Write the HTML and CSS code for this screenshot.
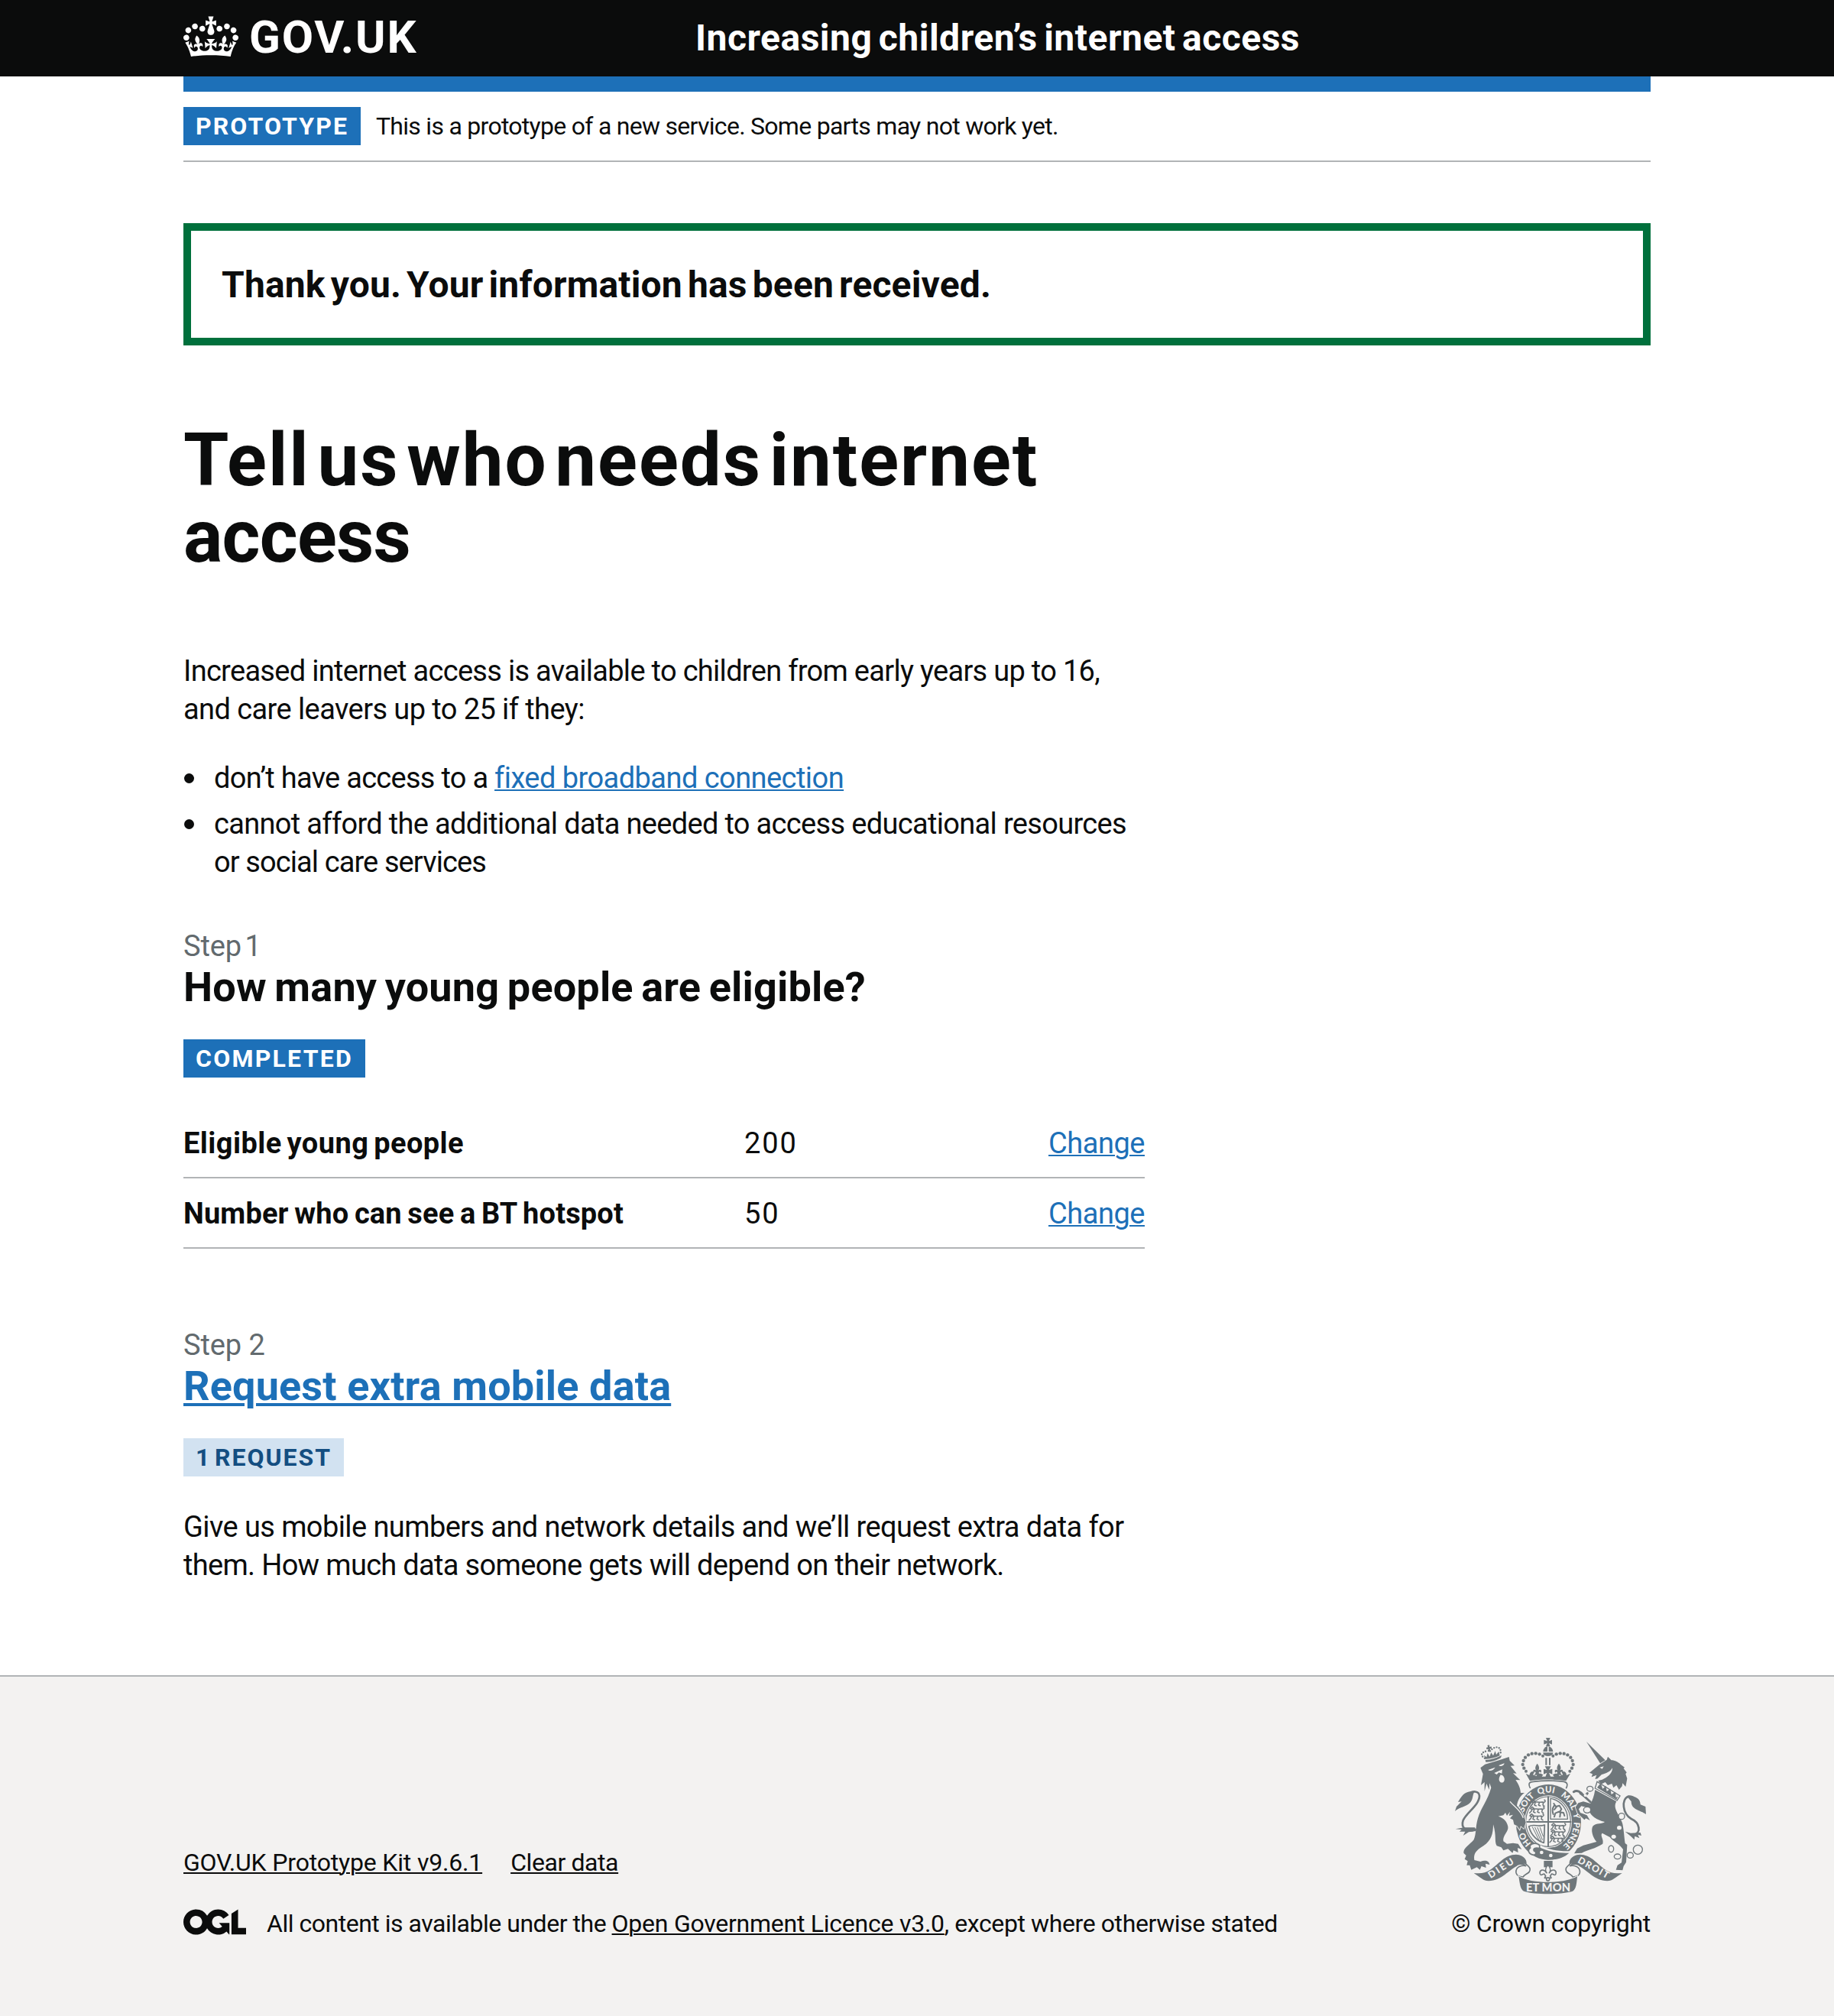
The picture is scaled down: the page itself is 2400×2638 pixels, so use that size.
FILE: index.html
```html
<!DOCTYPE html>
<html lang="en">
<head>
<meta charset="utf-8">
<title>Tell us who needs internet access</title>
<link rel="stylesheet" href="styles.css">
</head>
<body>
<header class="header">
  <div class="container header-row">
    <a class="logo" href="#">
      <svg class="logo-crown" viewBox="0 0 132 97" width="72" height="60" preserveAspectRatio="xMidYMid meet" aria-hidden="true"><path fill="currentColor" fill-rule="evenodd" d="M25 30.2c3.5 1.5 7.7-.2 9.1-3.7 1.5-3.6-.2-7.8-3.9-9.2-3.6-1.4-7.6.3-9.1 3.9-1.4 3.5.3 7.5 3.9 9zM9 39.5c3.6 1.5 7.8-.2 9.2-3.7 1.5-3.6-.2-7.8-3.9-9.1-3.6-1.5-7.6.2-9.1 3.8-1.4 3.5.3 7.5 3.8 9zM4.4 57.2c3.5 1.5 7.7-.2 9.1-3.8 1.5-3.6-.2-7.7-3.9-9.1-3.5-1.5-7.6.3-9.1 3.8-1.4 3.5.3 7.6 3.9 9.1zm38.3-21.4c3.5 1.5 7.7-.2 9.1-3.8 1.5-3.6-.2-7.7-3.9-9.1-3.6-1.5-7.6.3-9.1 3.8-1.3 3.6.4 7.7 3.9 9.1zm64.4-5.6c-3.6 1.5-7.8-.2-9.1-3.7-1.5-3.6.2-7.8 3.8-9.2 3.6-1.4 7.7.3 9.2 3.9 1.3 3.5-.4 7.5-3.9 9zm15.9 9.3c-3.6 1.5-7.7-.2-9.1-3.7-1.5-3.6.2-7.8 3.7-9.1 3.6-1.5 7.7.2 9.2 3.8 1.5 3.5-.3 7.5-3.8 9zm4.7 17.7c-3.6 1.5-7.8-.2-9.2-3.8-1.5-3.6.2-7.7 3.9-9.1 3.6-1.5 7.7.3 9.2 3.8 1.3 3.5-.4 7.6-3.9 9.1zM89.3 35.8c-3.6 1.5-7.8-.2-9.2-3.8-1.4-3.6.2-7.7 3.9-9.1 3.6-1.5 7.7.3 9.2 3.8 1.4 3.6-.3 7.7-3.9 9.1zM69.7 17.7l8.9 4.7V9.3l-8.9 2.8c-.2-.3-.5-.6-.9-.9L72.4 0H59.6l3.5 11.2c-.3.3-.6.5-.9.9l-8.8-2.8v13.1l8.8-4.7c.3.3.6.7.9.9l-5 15.4v.1c-.2.8-.4 1.6-.4 2.4 0 4.1 3.1 7.5 7 8.1h.2c.3 0 .7.1 1 .1.4 0 .7 0 1-.1h.2c4-.6 7.1-4.1 7.1-8.1 0-.8-.1-1.7-.4-2.4V34l-5.1-15.4c.4-.2.7-.6 1-.9zM66 92.8c16.9 0 32.8 1.1 47.1 3.2 4-16.9 8.9-26.7 14-33.5l-9.6-3.4c1 4.9 1.1 7.2 0 10.2-1.5-1.4-3-4.3-4.2-8.7L108.6 76c2.8-2 5-3.2 7.5-3.3-4.4 9.4-10 11.9-13.6 11.2-4.3-.8-6.3-4.6-5.6-7.9 1-4.7 5.7-5.9 8-.5 4.3-8.7-3-11.4-7.6-8.8 7.1-7.2 7.9-13.5 2.1-21.1-8 6.1-8.1 12.3-4.5 20.8-4.7-5.4-12.1-2.5-9.5 6.2 3.4-5.2 7.9-2 7.2 3.1-.6 4.3-6.4 7.8-13.5 7.2-10.3-.9-10.9-8-11.2-13.8 2.5-.5 7.1 1.8 11 7.3L80.2 60c-4.1 4.4-8 5.3-12.3 5.4 1.4-4.4 8-11.6 8-11.6H55.5s6.4 7.2 7.9 11.6c-4.2-.1-8-1-12.3-5.4l1.4 16.4c3.9-5.5 8.5-7.7 10.9-7.3-.3 5.8-.9 12.8-11.1 13.8-7.2.6-12.9-2.9-13.5-7.2-.7-5 3.8-8.3 7.1-3.1 2.7-8.7-4.6-11.6-9.4-6.2 3.7-8.5 3.6-14.7-4.6-20.8-5.8 7.6-5 13.9 2.2 21.1-4.7-2.6-11.9.1-7.7 8.8 2.3-5.5 7.1-4.2 8.1.5.7 3.3-1.3 7.1-5.7 7.9-3.5.7-9-1.8-13.5-11.2 2.5.1 4.7 1.3 7.5 3.3l-4.7-15.4c-1.2 4.4-2.7 7.2-4.3 8.7-1.1-3-.9-5.3 0-10.2l-9.5 3.4c5 6.9 9.9 16.7 14 33.5 14.8-2.1 30.8-3.2 47.7-3.2z"/></svg>
      <span class="logo-text">GOV.UK</span>
    </a>
    <a class="service-name" href="#">Increasing children’s internet access</a>
  </div>
</header>

<div class="container">
  <div class="blue-bar"></div>
  <div class="phase-banner">
    <strong class="tag tag-phase">prototype</strong>
    <span class="phase-text">This is a prototype of a new service. Some parts may not work yet.</span>
  </div>

  <main class="main">
    <div class="notice"><h2 class="notice-title">Thank you. Your information has been received.</h2></div>

    <div class="column">
      <h1 class="title">Tell us who needs internet <span class="title-end">access</span></h1>

      <p class="body intro">Increased internet access is available to children from early years up to 16, <span class="intro-end">and care leavers up to 25 if they:</span></p>
      <ul class="list">
        <li class="item-broadband">don’t have access to a <a class="link link-broadband" href="#">fixed broadband connection</a></li>
        <li>cannot afford the additional data needed to access educational resources <span class="item-end">or social care services</span></li>
      </ul>

      <section class="step">
        <span class="caption caption-one">Step 1</span>
        <h2 class="heading heading-plain">How many young people are eligible?</h2>
        <strong class="tag tag-completed">Completed</strong>
        <dl class="summary">
          <div class="summary-row">
            <dt class="key-eligible">Eligible young people</dt><dd class="value">200</dd><dd class="action"><a class="link" href="#">Change</a></dd>
          </div>
          <div class="summary-row">
            <dt class="key-hotspot">Number who can see a BT hotspot</dt><dd class="value">50</dd><dd class="action"><a class="link" href="#">Change</a></dd>
          </div>
        </dl>
      </section>

      <section class="step step-two">
        <span class="caption">Step 2</span>
        <h2 class="heading"><a class="link link-heading" href="#">Request extra mobile data</a></h2>
        <strong class="tag tag-light">1 request</strong>
        <p class="body give">Give us mobile numbers and network details and we’ll request extra data for <span class="give-end">them. How much data someone gets will depend on their network.</span></p>
      </section>
    </div>
  </main>
</div>

<footer class="footer">
  <div class="container footer-row">
    <div>
      <div class="footer-links"><a class="kit" href="#">GOV.UK Prototype Kit v9.6.1</a><a class="clear" href="#">Clear data</a></div>
      <div class="licence">
        <svg class="ogl" viewBox="0 0 483.2 195.7" width="82" height="34" aria-hidden="true"><path fill="currentColor" d="M421.5 142.8V.1l-50.7 32.3v161.1h112.4v-50.7zm-122.3-9.6A47.12 47.12 0 0 1 221 97.8c0-26 21.1-47.1 47.1-47.1 16.7 0 31.4 8.7 39.7 21.8l42.7-27.2A97.63 97.63 0 0 0 268.1 0c-36.5 0-68.3 20.1-85.1 49.7A98 98 0 0 0 97.8 0C43.9 0 0 43.9 0 97.8s43.9 97.8 97.8 97.8c36.5 0 68.3-20.1 85.1-49.7a97.76 97.76 0 0 0 149.6 25.4l19.4 22.2h3v-87.8h-80l24.3 27.5zM97.8 145c-26 0-47.1-21.1-47.1-47.1s21.1-47.1 47.1-47.1 47.1 21.1 47.1 47.1S123.8 145 97.8 145"/></svg>
        <span class="licence-text">All content is available under the <a href="#">Open Government Licence v3.0</a><span class="licence-end">, except where otherwise stated</span></span>
      </div>
    </div>
    <div class="copyright">
      <svg class="crest" viewBox="60 60 780 642" width="260" height="214" aria-hidden="true">
        <defs>
          <path id="motto" d="M438 515A101 114 0 0 1 438 287A101 114 0 0 1 438 515"/>
          <g id="fleur"><path d="M0-27C-8-16-10-8-4 0C-12-6-20 0-14 9C-11 4-7 5-6 10L-12 18H12L6 10C7 5 11 4 14 9C20 0 12-6 4 0C10-8 8-16 0-27Z"/></g>
          <g id="passant" fill="none" stroke-width="4.5" stroke-linecap="round" stroke-linejoin="round"><path d="M-30 10L-24 4L-20-4L-27-7M-22-5C-10-9 2-3 14-6L20-2L18 6L24 10M-12-3L-15 6L-8 9M4-3L1 6L8 9M16-6C28-2 30-12 24-14M-26-9L-20-14L-14-9"/></g>
        </defs>
        <g class="ink">
          <!-- royal crown -->
          <path d="M429 72H446L441 85L453 80V98L441 93L446 106H429L434 93L421 98V80L434 85Z"/>
          <path d="M418 126C419 113 427 107 435 106V126ZM440 106C449 108 456 114 457 126H440Z"/>
          <path d="M418 130H457C456 140 448 144 437 144C427 144 419 140 418 130Z"/>
          <g id="beads">
            <circle cx="417" cy="143" r="6"/><circle cx="404" cy="136" r="6.5"/><circle cx="389" cy="133" r="6.5"/><circle cx="374" cy="134" r="6.5"/><circle cx="360" cy="139" r="6.5"/><circle cx="348" cy="149" r="6.5"/><circle cx="341" cy="162" r="6.5"/><circle cx="338" cy="177" r="6.5"/><circle cx="343" cy="191" r="6.5"/><circle cx="351" cy="203" r="6"/>
          </g>
          <use href="#beads" transform="translate(874 0) scale(-1 1)"/>
          <path d="M427 151H433V179H427ZM441 151H447V179H441Z"/>
          <path d="M350 212L366 241C410 234 464 234 508 241L525 212L510 219C510 207 500 199 491 208L496 217L482 222C480 212 466 208 456 217L461 224H413L418 217C408 208 394 212 392 222L378 217L383 208C375 199 366 207 364 219Z"/>
          <use href="#fleur" x="395" y="200"/><use href="#fleur" x="480" y="200"/>
          <path d="M425 184H449L441 198L454 194V215L441 209L448 226H427L433 209L420 215V194L433 198Z"/>
          <path class="line" d="M367 268C358 250 365 245 380 244C420 239 460 239 500 244C514 247 515 256 509 269" stroke-width="5"/>
          <!-- garter -->
          <ellipse cx="439" cy="403" rx="128" ry="148"/>
        </g>
        <path class="paper" d="M369 266C400 249 476 249 506 267L509 257C480 245 400 245 366 257Z"/>
        <ellipse class="paper" cx="438" cy="401" rx="93" ry="103"/>
        <ellipse class="line" cx="438" cy="401" rx="88" ry="98" stroke-width="3.5"/>
        <g class="motto">
          <text><textPath href="#motto" startOffset="74">HO</textPath></text>
          <text><textPath href="#motto" startOffset="205">SOIT</textPath></text>
          <text><textPath href="#motto" startOffset="298">QUI</textPath></text>
          <text><textPath href="#motto" startOffset="388">MAL</textPath></text>
          <text><textPath href="#motto" startOffset="474">Y</textPath></text>
          <text><textPath href="#motto" startOffset="508">PENSE</textPath></text>
        </g>
        <!-- quartered arms -->
        <g class="line">
          <path d="M438 304V498M350 402H527" stroke-width="6"/>
          <g><use href="#passant" x="399" y="330"/><use href="#passant" x="395" y="357"/><use href="#passant" x="393" y="385"/></g>
          <g><use href="#passant" x="479" y="422"/><use href="#passant" x="477" y="447"/><use href="#passant" x="474" y="472"/></g>
          <path d="M447 310V391H514C515 355 490 318 447 310Z" stroke-width="4"/>
          <path d="M460 330L468 342L482 338L490 352L482 364L498 366L502 378M470 344L462 354M480 362L466 368L462 382M486 366L484 382M458 372C450 350 458 344 462 338" stroke-width="6"/>
          <path d="M362 420C380 408 400 424 424 414L421 484C398 478 372 458 362 420Z" stroke-width="5"/>
          <path d="M376 422L404 478M386 424L410 476M396 424L415 472M406 424L418 458" stroke-width="3"/>
        </g>
        <!-- buckle and strap -->
        <path class="paper" d="M392 484C430 512 480 520 540 516L530 528C475 530 425 522 388 500Z"/>
        <path class="ink" d="M398 498C430 518 480 526 520 524C490 552 440 560 388 536Z"/>
        <circle class="paper" cx="412" cy="522" r="7"/><circle class="paper" cx="448" cy="534" r="7"/>
        <path class="halo" d="M404 494C388 480 360 488 368 504C356 512 360 530 382 532C394 528 390 518 382 516C378 506 388 502 404 506Z"/>

        <!-- lion -->
        <path class="ink halo-thin" d="M172 190L190 176C220 168 250 158 284 147L287 162L306 181L290 182L314 212L300 211L328 238L310 237C322 255 328 268 330 288H345C328 300 318 318 315 338C330 352 348 382 350 404L342 428L330 418L326 432L316 418L304 412L300 394L288 388L300 374L284 378L288 362L276 378L270 366L262 376L242 380C262 386 276 398 280 420C284 440 258 455 262 478L276 488L300 485L320 488L334 510L318 504L320 522L302 514L298 524L280 508L262 514L254 502L236 496C226 478 236 458 222 412C222 450 214 476 184 496C154 514 144 528 148 552L172 558C190 550 206 554 208 570L192 566L194 582L176 576L170 590L158 580L136 590L130 572L118 572L122 556L110 548L116 534L106 524C104 504 130 492 146 472C156 452 152 420 162 388C174 346 200 320 214 268L208 250L206 276L196 252L188 282L188 246L174 258L182 214Z"/>
        <path class="paper" d="M202 198L230 188C224 200 208 204 202 198ZM244 180L266 172C264 184 248 186 244 180ZM226 210L258 196L256 212L244 208L236 216ZM250 218C264 216 272 238 262 246C250 252 242 240 246 228Z"/>
        <path class="cut" d="M288 322C304 342 330 356 340 386"/>
        <path class="ink" d="M191 159C214 158 232 152 255 141L252 150C236 160 214 168 193 167Z"/>
        <path class="ink" d="M190 155L186 140L196 148L200 132L208 146L214 130L222 142L230 124L234 138L244 126L248 142C230 150 210 156 190 155Z"/>
        <path class="dots" d="M189 152C170 142 174 126 200 124M204 123L202 110M210 124C232 98 258 108 250 136"/>
        <path class="ink" d="M199 102L207 100L208 108L215 106L216 114L209 115L211 122L203 123L203 116L196 117L195 110L202 109Z"/>
        <path class="line" d="M152 432C116 446 94 424 104 396C116 366 168 336 168 300C166 280 142 278 122 294" stroke-width="8"/>
        <path class="ink" d="M148 284C110 278 98 302 84 324L98 322L78 342L72 360C88 344 118 342 132 326C144 312 140 298 148 284ZM74 430L98 432L90 440L112 440L104 456L126 442L154 438L150 424L108 424Z"/>

        <!-- unicorn -->
        <path class="ink" d="M588 87L662 160L642 172Z"/>
        <path class="ink" d="M600 209L640 176L668 158L672 146L686 160C700 160 714 168 722 176L738 188L734 192L746 208L742 214L748 232L742 264L730 250L728 262L716 276L706 258L694 268L688 252L672 258L662 246L646 254L634 240L650 236C668 230 692 210 690 190C682 206 664 212 648 216L632 232L622 234L628 218L608 226L612 214Z"/>
        <path class="paper" d="M640 188L656 184L650 194Z"/>
        <path class="paper line-edge" d="M630 244L720 300L708 318L622 270Z"/>
        <path class="ink" d="M634 262L644 250L652 272L664 260L668 282L682 272L686 294L702 284L704 306L712 302L706 314L630 268Z"/>
        <path class="ink halo-thin" d="M622 276L706 322C688 350 722 378 730 410C736 440 736 460 740 486L748 492L744 560L734 576L730 592L704 590L710 572L726 562L732 510C720 490 694 480 680 462L650 446C640 456 658 470 652 488C626 506 590 512 570 524L540 526L552 506L576 494L628 480C612 464 604 432 614 418C628 404 650 412 660 402C628 394 604 378 600 360L586 344L568 340L558 352L564 366L590 376L602 396L586 388L580 394L554 368L545 344L556 328L576 322L604 330C612 318 618 300 622 276Z"/>
        <path class="line" d="M604 324L578 300C566 282 550 276 538 284M564 290L580 302L592 290" stroke-width="9"/>
        <g class="line" stroke-width="4">
          <ellipse cx="602" cy="272" rx="12" ry="10"/><ellipse class="paper" cx="591" cy="355" rx="14" ry="12"/><ellipse class="paper" cx="726" cy="380" rx="12" ry="12"/><ellipse cx="685" cy="508" rx="10" ry="13"/><ellipse cx="710" cy="538" rx="13" ry="10"/><ellipse cx="760" cy="533" rx="12" ry="11"/><circle cx="790" cy="511" r="18"/>
        </g>
        <circle class="paper" cx="584" cy="298" r="6"/><ellipse class="paper" cx="717" cy="425" rx="9" ry="8"/><ellipse class="paper" cx="695" cy="460" rx="9" ry="8"/>
        <path class="line" d="M770 454C808 446 796 404 764 390C730 370 724 314 752 302C766 300 774 306 780 312" stroke-width="8"/>
        <path class="ink" d="M746 300C780 298 800 310 800 334L820 342L822 372C800 356 764 356 764 322ZM740 440L762 446L800 444L804 456L790 452L796 466L778 458L776 472L762 458Z"/>

        <!-- motto ribbon -->
        <g id="ribbon">
          <path class="ink" d="M146 603C176 606 192 602 208 592C246 566 268 530 312 530C346 532 360 556 350 577C340 568 322 568 314 576C284 590 256 632 204 634C184 634 170 618 146 603Z"/>
          <path class="halo" d="M352 575C336 570 308 578 312 602C314 612 326 618 340 618C344 606 372 604 366 584C362 576 352 568 340 560"/>
        </g>
        <use href="#ribbon" transform="translate(874 0) scale(-1 1)"/>
        <path class="ink halo-thin" d="M322 616C372 646 502 646 552 616C550 640 548 668 534 674C490 688 384 688 342 674C328 668 326 640 322 616Z"/>
        <g class="scroll-text">
          <text transform="translate(212 625) rotate(-33)" textLength="112">DIEU</text>
          <text x="351" y="674" textLength="174" class="scroll-mid">ET MON</text>
          <text transform="translate(551 560) rotate(29)" textLength="134">DROIT</text>
        </g>
        <path class="ink" d="M421 555H455V580H421Z"/>
        <path class="halo" d="M437 570C424 586 426 594 432 602C420 584 402 590 406 606C410 616 416 606 422 606L428 614L424 622H450L446 614L452 606C458 606 464 616 468 606C472 590 454 584 442 602C448 594 450 586 437 570Z"/>
        <circle class="halo" cx="437" cy="627" r="6"/>
      </svg>
      <a class="copyright-text" href="#">© Crown copyright</a>
    </div>
  </div>
</footer>
</body>
</html>
```
FILE: styles.css
```css
* { box-sizing: border-box; }

body {
  margin: 0;
  background: #fff;
  color: #0b0c0c;
  font-family: Roboto, "Liberation Sans", sans-serif;
  font-size: 38px;
  line-height: 50px;
}

h1, h2, p, ul, dl, dd { margin: 0; padding: 0; }
svg { display: block; }

.container { width: 1920px; margin: 0 auto; }

/* Header */
.header { background: #0b0c0c; color: #fff; height: 100px; }
.header-row { display: grid; grid-template-columns: 670px 1fr; }
.header a { color: inherit; text-decoration: none; }
.logo { display: flex; gap: 14px; padding-top: 19px; height: 100px; }
.logo-crown { margin-top: -1px; }
.logo-text { font-size: 60px; line-height: 60px; font-weight: 700; letter-spacing: 1.8px; }
.service-name { padding-top: 25px; font-size: 48px; line-height: 50px; font-weight: 700; letter-spacing: 0.5px; word-spacing: -4px; }
.blue-bar { height: 20px; background: #1d70b8; }

/* Phase banner and tags */
.phase-banner { display: flex; gap: 20px; padding: 20px 0; border-bottom: 2px solid #b1b4b6; height: 92px; }
.phase-text { font-size: 32px; letter-spacing: -0.72px; }
.tag {
  display: block;
  width: max-content;
  height: 50px;
  padding: 0 16px;
  background: #1d70b8;
  color: #fff;
  font-size: 32px;
  font-weight: 700;
  letter-spacing: 2.1px;
  text-transform: uppercase;
}
.tag-completed { letter-spacing: 2.23px; }
.tag-light { background: #d2e2f1; color: #144e81; letter-spacing: 2px; word-spacing: -5.4px; }

/* Confirmation panel */
.main { padding-top: 80px; height: 1980px; }
.notice { border: 10px solid #00703c; height: 160px; padding: 46px 40px 44px; }
.notice-title { font-size: 48px; line-height: 50px; letter-spacing: 0.15px; word-spacing: -5px; }

/* Content column */
.column { width: 1258px; padding-top: 100px; }
.title { font-size: 96px; line-height: 100px; letter-spacing: 1.95px; word-spacing: -16px; }
.title-end { letter-spacing: -0.8px; }
.body { letter-spacing: -0.63px; }
.intro { width: 1240px; margin-top: 101px; letter-spacing: -0.7px; }
.intro-end { letter-spacing: -0.58px; }
.list { margin-top: 40px; padding-left: 40px; display: grid; gap: 10px; list-style: none; letter-spacing: -0.67px; }
.list li::before {
  content: "";
  float: left;
  width: 13px;
  height: 13px;
  margin: 19px 0 0 -39px;
  border-radius: 50%;
  background: #0b0c0c;
}
.item-broadband { letter-spacing: -0.72px; }
.item-end { display: block; letter-spacing: -0.9px; }

.link { color: #1d70b8; text-decoration: underline; text-decoration-thickness: 2px; text-underline-offset: 2px; }
.link-broadband { letter-spacing: -0.55px; }
.link-heading { text-decoration-thickness: 4px; text-underline-offset: 4px; }

/* Steps */
.step { margin-top: 60px; }
.step-two { margin-top: 101px; }
.caption { display: block; margin-bottom: -1px; color: #626a6e; letter-spacing: -0.1px; }
.caption-one { word-spacing: -5px; }
.heading { margin-bottom: 38px; font-size: 54px; line-height: 60px; letter-spacing: 0.15px; }
.heading-plain { letter-spacing: 0.17px; word-spacing: -3px; }
.give { margin-top: 41px; letter-spacing: -0.59px; }
.give-end { letter-spacing: -0.68px; }

.summary { margin-top: 40px; }
.summary-row { display: grid; grid-template-columns: 734px 1fr auto; padding: 21px 0 19px; border-bottom: 2px solid #b1b4b6; }
.summary-row dt { font-weight: 700; }
.key-eligible { letter-spacing: 0.43px; word-spacing: -3px; }
.key-hotspot { letter-spacing: 0.14px; word-spacing: -2px; }
.value { letter-spacing: 1.9px; }
.action { letter-spacing: -0.47px; }

/* Footer */
.footer { background: #f3f2f1; border-top: 2px solid #b1b4b6; height: 446px; padding-top: 76px; font-size: 32px; }
.footer a { color: inherit; text-decoration-thickness: 2px; text-underline-offset: 2px; }
.footer-row { display: flex; justify-content: space-between; align-items: flex-end; }
.footer-links { display: flex; gap: 37px; margin-bottom: 30px; }
.kit { letter-spacing: -0.18px; }
.clear { letter-spacing: -0.41px; }
.licence { display: flex; gap: 27px; }
.ogl { margin-top: 6px; }
.licence-text { letter-spacing: -0.48px; }
.licence-text a { letter-spacing: -0.25px; }
.licence-text .licence-end { letter-spacing: -0.4px; }
.copyright { display: grid; gap: 8px; justify-items: end; }
.footer .copyright-text { text-decoration: none; letter-spacing: -0.25px; white-space: nowrap; }

/* Coat of arms */
.ink { fill: #6f777b; }
.line { fill: none; stroke: #6f777b; stroke-linecap: round; stroke-linejoin: round; }
.line use { fill: none; }
.paper { fill: #f3f2f1; }
.line-edge { stroke: #6f777b; stroke-width: 4; }
.cut { fill: none; stroke: #f3f2f1; stroke-width: 4; }
.halo { fill: #f3f2f1; stroke: #6f777b; stroke-width: 5; stroke-linejoin: round; }
.halo-thin { stroke: #f3f2f1; stroke-width: 5; paint-order: stroke; }
.dots { fill: none; stroke: #6f777b; stroke-width: 7; stroke-linecap: round; stroke-dasharray: 0.1 10; }
.motto, .scroll-text { fill: #f3f2f1; font-family: Lato, "Liberation Sans", sans-serif; font-weight: 900; font-size: 34px; }
.scroll-text { font-size: 37px; }
.scroll-mid { font-size: 44px; }
```
